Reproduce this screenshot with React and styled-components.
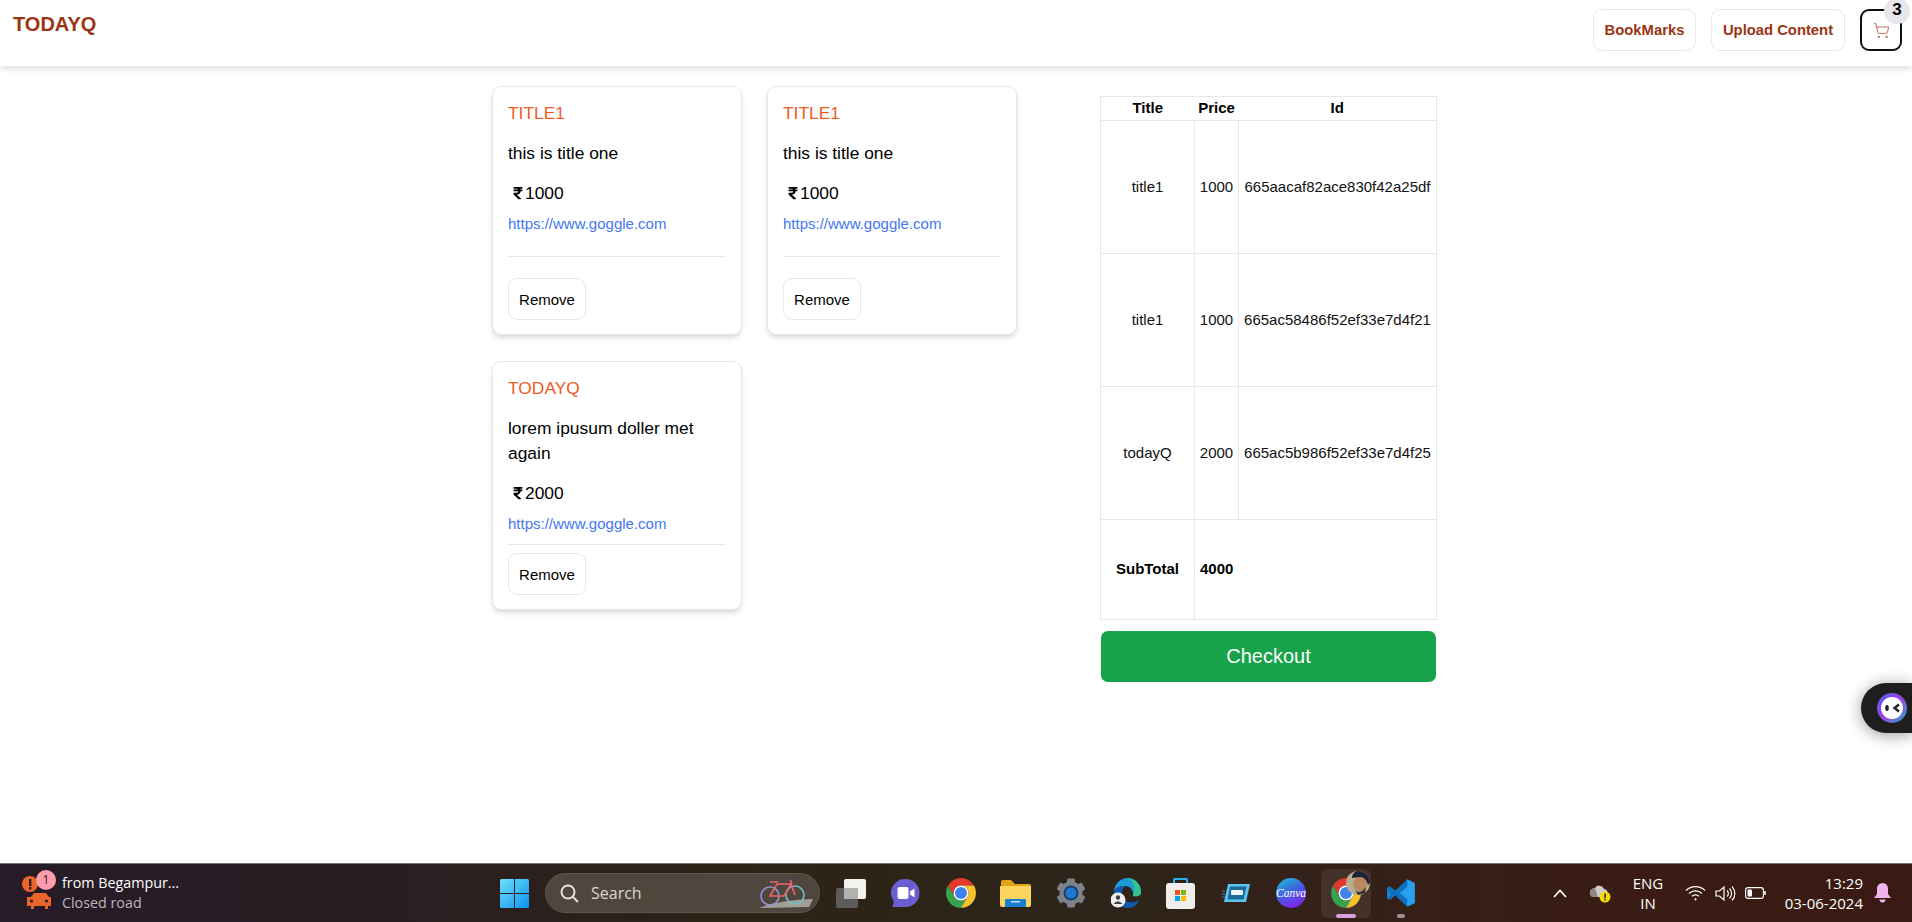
import React from "react";
import styled, { createGlobalStyle } from "styled-components";
import { ShoppingCart } from "lucide-react";
import { FaRupeeSign } from "react-icons/fa";

const Global = createGlobalStyle`
  * { box-sizing: border-box; }
  html, body { margin: 0; padding: 0; height: 100%; background: #fff; overflow: hidden; }
  body { font-family: "Liberation Sans", Arial, sans-serif; color: #000; }
`;

const Page = styled.div`display: flex; flex-direction: column; height: 922px; width: 1912px; position: relative; overflow: hidden;`;

const Navbar = styled.header`
  height: 66px; flex: none; display: flex; justify-content: space-between; align-items: flex-start;
  padding: 9px 10px 0 13px; background: #fff; box-shadow: 0 3px 6px rgba(0,0,0,.13); position: relative; z-index: 2;
`;
const Logo = styled.div`font-size: 20px; font-weight: 700; color: #9a3412; line-height: 22px; margin-top: 4px;`;
const NavActions = styled.nav`display: flex; gap: 15px;`;
const NavButton = styled.button`
  height: 42px; width: ${p => p.$w}px; padding: 0; background: #fff; border: 1px solid #e5e7eb; border-radius: 9px;
  font: 700 14.8px "Liberation Sans", Arial, sans-serif; color: #9a3412;
`;
const CartButton = styled.button`
  width: 42px; height: 42px; position: relative; padding: 0; display: flex; align-items: center; justify-content: center;
  background: #fff; border: 2px solid #111; border-radius: 9px; color: #b4472a;
`;
const Badge = styled.span`
  position: absolute; left: 22px; top: -13px; width: 26px; height: 26px; border-radius: 50%;
  background: #e5e7eb; color: #000; font-weight: 700; font-size: 17px; line-height: 24px; text-align: center;
`;

const Main = styled.main`flex: 1; display: flex; align-items: flex-start; padding: 20px 0 0 492px;`;
const CardGrid = styled.section`display: grid; grid-template-columns: 250px 250px; gap: 26px 25px;`;
const Card = styled.article`
  height: 249px; display: flex; flex-direction: column; padding: 17px 15px 14px; background: #fff;
  border: 1px solid #e5e7eb; border-radius: 9px; box-shadow: 0 4px 6px -1px rgba(0,0,0,.12), 0 2px 4px -2px rgba(0,0,0,.1);
`;
const CardTitle = styled.h2`margin: 0 0 18px; font-size: 17.4px; font-weight: 400; line-height: 19px; color: #ef5a1f;`;
const CardText = styled.p`margin: 0 0 15px; font-size: 17.4px; line-height: 25px;`;
const Price = styled.div`display: flex; align-items: center; padding-left: 3px; font-size: 17.4px; line-height: 24px; margin-bottom: 8px;`;
const CardLink = styled.a`font-size: 15px; line-height: 22px; color: #4477f2; text-decoration: none;`;
const Divider = styled.hr`margin: auto 0; border: 0; border-top: 1px solid #e5e7eb; width: 100%;`;
const RemoveButton = styled.button`
  align-self: flex-start; flex: none; width: 78px; height: 42px; padding: 0; background: #fff; border: 1px solid #e5e7eb;
  border-radius: 9px; font: 400 15px "Liberation Sans", Arial, sans-serif; color: #000;
`;

const Summary = styled.aside`width: 336px; margin: 10px 0 0 83px;`;
const Table = styled.table`width: 336px; table-layout: fixed; border-collapse: collapse; font-size: 15px;`;
const HeadCell = styled.th`height: 24px; padding: 0 0 2px; font-weight: 700; text-align: center; border-top: 1px solid #e5e7eb; border-bottom: 1px solid #e5e7eb; &:first-child { border-left: 1px solid #e5e7eb; } &:last-child { border-right: 1px solid #e5e7eb; }`;
const Cell = styled.td`height: ${p => p.$h || 133}px; padding: 0 0 2px; text-align: center; border: 1px solid #e5e7eb; white-space: nowrap; color: #111;`;
const TotalCell = styled(Cell)`font-weight: 700; color: #000; text-align: ${p => p.$left ? "left" : "center"}; padding-left: ${p => p.$left ? 5 : 0}px;`;
const Checkout = styled.button`
  display: block; width: 335px; height: 51px; margin: 11px 0 0 1px; background: #16a34a; border: 0; border-radius: 7px;
  font: 400 20px "Liberation Sans", Arial, sans-serif; color: #fff;
`;

const Assistant = styled.div`
  position: absolute; right: 0; top: 683px; width: 51px; height: 50px; display: flex; align-items: center; padding-left: 16px;
  background: #1e1e1e; border-radius: 25px 0 0 25px; box-shadow: 0 2px 16px rgba(0,0,0,.4);
`;

const Taskbar = styled.footer`
  height: 59px; flex: none; display: flex; align-items: center; color: #fff; font-family: "Open Sans", "Noto Sans", sans-serif;
  border-top: 1px solid #77736f;
  background: linear-gradient(90deg, #261b27 0%, #2a1e22 20%, #2d2316 40%, #2c2519 55%, #33211a 68%, #3a1c14 85%, #3a1a13 100%);
`;
const Weather = styled.div`width: 500px; flex: none; display: flex; align-items: center; padding-left: 22px; height: 100%;`;
const AlertIcon = styled.div`position: relative; width: 30px; height: 34px; flex: none; margin-right: 10px;`;
const AlertBadge = styled.span`
  position: absolute; left: 14px; top: -6px; width: 20px; height: 20px; border-radius: 50%; background: #ff9dad; color: #3a1a20;
  font-size: 12px; line-height: 20px; text-align: center;
`;
const WeatherText = styled.div`display: flex; flex-direction: column; font-size: 14.3px; line-height: 20px;`;
const Muted = styled.span`color: #bdb8b8;`;
const SearchBox = styled.div`
  width: 275px; height: 40px; flex: none; margin: 0 3px 0 16px; display: flex; align-items: center; padding: 0 6px 0 14px; gap: 12px;
  background: #4f463d; border: 1px solid #5d554c; border-radius: 20px; color: #dcd8d2; font-size: 16px;
`;
const Bike = styled.svg`margin-left: auto; flex: none;`;
const Slot = styled.div`
  width: 55px; height: 49px; flex: none; position: relative; display: flex; align-items: center; justify-content: center;
`;
const ActiveSlot = styled(Slot)`
  &::before { content: ""; position: absolute; inset: 0 2px 0 3px; border-radius: 6px; background: #45302a; }
  & > * { position: relative; }
`;
const Runner = styled.span`
  && { position: absolute; } bottom: 0; left: 50%; transform: translateX(-50%); height: 4px; border-radius: 2px;
  width: ${p => p.$w}px; background: ${p => p.$c};
`;
const Avatar = styled.svg`&& { position: absolute; } left: 28px; top: 2px;`;
const Tray = styled.div`margin-left: auto; display: flex; align-items: center; height: 100%; padding-right: 11px; font-size: 15px;`;
const TrayIcon = styled.div`width: ${p => p.$w}px; display: flex; justify-content: center; align-items: center; flex: none;`;
const Lang = styled.div`width: 40px; margin-right: 12px; text-align: center; line-height: 20px;`;
const Clock = styled.div`width: 88px; margin-left: 5px; text-align: right; line-height: 20px;`;

const Chrome = ({ s = 30 }) => (
  <svg width={s} height={s} viewBox="2 2 20 20">
    <path fill="#e3392d" d="M3.34 7A10 10 0 0 1 20.66 7H12A5 5 0 0 0 7.67 14.5Z" />
    <path fill="#35a34f" d="M3.34 7A10 10 0 0 0 12 22L16.33 14.5A5 5 0 0 1 7.67 14.5Z" />
    <path fill="#f5c22c" d="M20.66 7H12A5 5 0 0 1 16.33 14.5L12 22A10 10 0 0 0 20.66 7Z" />
    <circle cx="12" cy="12" r="5" fill="#fff" />
    <circle cx="12" cy="12" r="4" fill="#3f82ec" />
  </svg>
);

const cards = [
  { title: "TITLE1", text: "this is title one", price: 1000 },
  { title: "TITLE1", text: "this is title one", price: 1000 },
  { title: "TODAYQ", text: "lorem ipusum doller met again", price: 2000 },
];
const rows = [
  ["title1", 1000, "665aacaf82ace830f42a25df"],
  ["title1", 1000, "665ac58486f52ef33e7d4f21"],
  ["todayQ", 2000, "665ac5b986f52ef33e7d4f25"],
];

export default function App() {
  return (
    <Page>
      <Global />
      <Navbar>
        <Logo>TODAYQ</Logo>
        <NavActions>
          <NavButton $w={103}>BookMarks</NavButton>
          <NavButton $w={134}>Upload Content</NavButton>
          <CartButton>
            <ShoppingCart size={17} strokeWidth={1.1} />
            <Badge>3</Badge>
          </CartButton>
        </NavActions>
      </Navbar>

      <Main>
        <CardGrid>
          {cards.map((c, i) => (
            <Card key={i}>
              <CardTitle>{c.title}</CardTitle>
              <CardText>{c.text}</CardText>
              <Price><FaRupeeSign size={14} />{c.price}</Price>
              <CardLink href="#">https://www.goggle.com</CardLink>
              <Divider />
              <RemoveButton>Remove</RemoveButton>
            </Card>
          ))}
        </CardGrid>
        <Summary>
          <Table>
            <colgroup><col width="94" /><col width="44" /><col width="198" /></colgroup>
            <thead><tr><HeadCell>Title</HeadCell><HeadCell>Price</HeadCell><HeadCell>Id</HeadCell></tr></thead>
            <tbody>
              {rows.map(r => (
                <tr key={r[2]}><Cell>{r[0]}</Cell><Cell>{r[1]}</Cell><Cell>{r[2]}</Cell></tr>
              ))}
              <tr><TotalCell $h={100}>SubTotal</TotalCell><TotalCell $h={100} $left colSpan={2}>4000</TotalCell></tr>
            </tbody>
          </Table>
          <Checkout>Checkout</Checkout>
        </Summary>
      </Main>

      <Assistant>
        <svg width="30" height="30" viewBox="0 0 30 30">
          <defs><linearGradient id="ring" x1="0" y1="0" x2="1" y2="1"><stop offset="0" stopColor="#4a63f0" /><stop offset=".5" stopColor="#a23fe0" /><stop offset="1" stopColor="#1fb0c8" /></linearGradient></defs>
          <circle cx="15" cy="15" r="15" fill="url(#ring)" />
          <circle cx="15" cy="15" r="11" fill="#fff" />
          <ellipse cx="10" cy="15" rx="1.8" ry="3" fill="#222" />
          <path d="M22 11.5 L17.5 15 L22 18.5" stroke="#222" strokeWidth="2.4" fill="none" />
        </svg>
      </Assistant>

      <Taskbar>
        <Weather>
          <AlertIcon>
            <svg width="30" height="34" viewBox="0 0 30 34">
              <circle cx="8" cy="8" r="8" fill="#e8652a" />
              <rect x="7" y="3" width="2.4" height="7" fill="#2a1e22" />
              <rect x="7" y="11" width="2.4" height="2.4" fill="#2a1e22" />
              <path d="M9 21 L12 17 H24 L27 21 H29 V30 H26 V33 H23 V30 H12 V33 H9 V30 H5 V21Z" fill="#e8652a" />
              <circle cx="9.5" cy="25" r="1.6" fill="#2a1e22" /><circle cx="24.5" cy="25" r="1.6" fill="#2a1e22" />
            </svg>
            <AlertBadge>1</AlertBadge>
          </AlertIcon>
          <WeatherText>
            <span>from Begampur...</span>
            <Muted>Closed road</Muted>
          </WeatherText>
        </Weather>

        <svg width="29" height="29" viewBox="0 0 29 29">
          <defs><linearGradient id="win" x1="0" y1="0" x2="1" y2="1"><stop offset="0" stopColor="#6fe0fb" /><stop offset="1" stopColor="#0a93f0" /></linearGradient></defs>
          <path fill="url(#win)" d="M0 1.5 Q0 0 1.5 0H14V14H0ZM15 0H27.5Q29 0 29 1.5V14H15ZM0 15H14V29H1.5Q0 29 0 27.5ZM15 15H29V27.5Q29 29 27.5 29H15Z" />
        </svg>

        <SearchBox>
          <svg width="19" height="19" viewBox="0 0 19 19" fill="none" stroke="#e4e1dc" strokeWidth="2"><circle cx="8" cy="8" r="6.5" /><path d="M12.7 12.7L18 18" /></svg>
          Search
          <Bike width="54" height="30" viewBox="0 0 54 30" fill="none">
            <path d="M0 30 Q20 22 54 21 L50 29 Z" fill="#b9b5ad" opacity=".8" />
            <circle cx="11" cy="18" r="9" stroke="#8e96dc" strokeWidth="1.6" />
            <circle cx="36" cy="17" r="9" stroke="#6fc0c8" strokeWidth="1.6" />
            <path d="M11 18 L18 6 L32 6 L25 18 Z M32 6 L36 17 M31 1 L33 6 M11 4 L19 4" stroke="#f0606e" strokeWidth="1.6" />
            <path d="M28 1 H34" stroke="#445" strokeWidth="1.4" />
          </Bike>
        </SearchBox>

        <Slot>
          <svg width="30" height="29" viewBox="0 0 30 29">
            <rect x="0" y="9" width="22" height="20" rx="2" fill="#5c5c5a" />
            <rect x="8" y="0" width="22" height="20" rx="2" fill="#f4f2ee" />
            <rect x="8" y="9" width="14" height="11" fill="#b4b2ae" />
          </svg>
        </Slot>
        <Slot>
          <svg width="29" height="29" viewBox="0 0 29 29">
            <path fill="#6a5fd0" d="M14.5 0A14 14 0 0 1 14.5 28H1Q3.2 25 2.6 22A14 14 0 0 1 14.500 0Z" />
            <rect x="6.500" y="8" width="11" height="12" rx="2" fill="#fff" />
            <path d="M19 12.500 L23.500 9.500 V18.500 L19 15.500Z" fill="#fff" />
          </svg>
        </Slot>
        <Slot><Chrome /></Slot>
        <Slot>
          <svg width="31" height="27" viewBox="0 0 31 27">
            <path fill="#e4a318" d="M1 2Q1 0 3 0H11L15 4H29Q31 4 31 6V10H1Z" />
            <path fill="#fdd55e" d="M0 6H31V25Q31 27 29 27H2Q0 27 0 25Z" />
            <path fill="#1b7fd1" d="M5 20Q5 19 6 19H25Q26 19 26 20V27H5Z" />
            <rect x="11" y="21" width="9" height="1.500" fill="#bfe3f7" />
          </svg>
        </Slot>
        <Slot>
          <svg width="30" height="30" viewBox="0 0 30 30">
            <g fill="#7d8289">
              <circle cx="15" cy="15" r="11.500" />
              {[0, 60, 120, 180, 240, 300].map(a => (
                <rect key={a} x="11" y="0.500" width="8" height="6" rx="1.500" transform={`rotate(${a} 15 15)`} />
              ))}
            </g>
            <circle cx="15" cy="15" r="7.500" fill="#1c3f70" />
            <circle cx="15" cy="15" r="5.500" fill="#1f78d1" />
          </svg>
        </Slot>
        <Slot>
          <svg width="30" height="30" viewBox="0 0 30 30">
            <path fill="#1c9ad6" d="M3 13C4 5 10 0 16 0 25 0 30 7 30 14 30 18 26 19 22 18 23 12 19 8 14 8 9 8 5 10 3 13Z" />
            <path fill="#31c48d" d="M22 18C26 19 30 18 30 14 30 7 25 0 16 0 22 2 25 8 22 18Z" />
            <path fill="#0d5bad" d="M3 13C1 21 7 30 17 30 23 30 27 26 28 22 24 25 14 26 11 19 10 15 11 11 14 8 9 8 5 10 3 13Z" />
            <circle cx="7" cy="22" r="7.500" fill="#eee" />
            <circle cx="7" cy="19.500" r="2.200" fill="#444" />
            <path d="M2.500 26Q7 20.500 11.500 26Z" fill="#444" />
          </svg>
        </Slot>
        <Slot>
          <svg width="29" height="31" viewBox="0 0 29 31">
            <path d="M8 6V2Q8 1 9 1H20Q21 1 21 2V6" stroke="#25b4f0" strokeWidth="2" fill="none" />
            <rect x="0" y="5" width="29" height="26" rx="3" fill="#f0eeeb" />
            <rect x="9" y="12" width="5" height="5" fill="#f0512a" />
            <rect x="15" y="12" width="5" height="5" fill="#7fba00" />
            <rect x="9" y="18" width="5" height="5" fill="#00a4ef" />
            <rect x="15" y="18" width="5" height="5" fill="#ffb900" />
          </svg>
        </Slot>
        <Slot>
          <svg width="28" height="18" viewBox="0 0 28 18">
            <path d="M0 7H3M0 10H3M0 13H3" stroke="#2a8fc0" strokeWidth="1" />
            <path d="M6 0H28L24 18H2Z" fill="#5cc4ef" />
            <path d="M8 2.500H24.500L21.500 15.500H5.500Z" fill="#1a6a9a" />
            <rect x="9" y="6" width="12" height="5" rx="1" fill="#e9f5fb" />
          </svg>
        </Slot>
        <Slot>
          <svg width="30" height="30" viewBox="0 0 30 30">
            <defs><linearGradient id="canva" x1="0" y1="0" x2=".5" y2="1"><stop offset="0" stopColor="#19c4cf" /><stop offset=".55" stopColor="#3f62e0" /><stop offset="1" stopColor="#7d2ae8" /></linearGradient></defs>
            <circle cx="15" cy="15" r="15" fill="url(#canva)" />
            <text x="15" y="19" textAnchor="middle" fontFamily="Liberation Serif, serif" fontStyle="italic" fontSize="11.5" fill="#fff">Canva</text>
          </svg>
        </Slot>
        <ActiveSlot>
          <Chrome />
          <Avatar width="24" height="24" viewBox="0 0 24 24">
            <circle cx="12" cy="12" r="12" fill="#b7ad92" />
            <path d="M12 0A12 12 0 0 1 24 12L22 14C20 6 12 6 6 7 6 3 9 0 12 0Z" fill="#1b2233" />
            <circle cx="14" cy="13" r="7" fill="#b98860" />
            <path d="M9 19Q14 24 20 16L19 22 12 24Z" fill="#3d3028" />
          </Avatar>
          <Runner $w={20} $c="#d8a2e0" />
        </ActiveSlot>
        <Slot>
          <svg width="30" height="30" viewBox="0 0 24 24">
            <path fill="#0f6fc0" d="M17 1 23 4V20L17 23 7.500 14 3 17.500 1 16.500V7.500L3 6.500 7.500 10Z" />
            <path fill="#2aa0ea" d="M17 1 23 4V20L17 23ZM17 7 11 12 17 17Z" />
            <path fill="#1b87d8" d="M1 16.500 4 13 1 7.500Z" />
          </svg>
          <Runner $w={8} $c="#9b9591" />
        </Slot>

        <Tray>
          <TrayIcon $w={24}>
            <svg width="14" height="9" viewBox="0 0 14 9" fill="none" stroke="#fff" strokeWidth="1.700"><path d="M1 8L7 1.500 13 8" /></svg>
          </TrayIcon>
          <TrayIcon $w={56}>
            <svg width="22" height="20" viewBox="0 0 22 20">
              <path d="M1 11A5 5 0 0 1 6 5 5 5 0 0 1 15 6 4 4 0 0 1 14 14H4A3.500 3.500 0 0 1 1 11Z" fill="#cfcdcb" />
              <path d="M1 11A5 5 0 0 1 6 5L9 14H4A3.500 3.500 0 0 1 1 11Z" fill="#8d8986" />
              <circle cx="16" cy="14" r="5.500" fill="#f5d90a" />
              <rect x="15.300" y="10.500" width="1.500" height="4.500" fill="#222" /><rect x="15.300" y="15.800" width="1.500" height="1.500" fill="#222" />
            </svg>
          </TrayIcon>
          <Lang>ENG<br />IN</Lang>
          <TrayIcon $w={30}>
            <svg width="21" height="16" viewBox="0 0 21 16" fill="none" stroke="#fff" strokeWidth="1.200"><path d="M1 5.500A13.500 13.500 0 0 1 20 5.500M4 8.500A9.500 9.500 0 0 1 17 8.500M7 11.300A5 5 0 0 1 14 11.300" /><circle cx="10.500" cy="14.300" r="1.100" fill="#fff" stroke="none" /></svg>
          </TrayIcon>
          <TrayIcon $w={30}>
            <svg width="21" height="17" viewBox="0 0 21 17" fill="none" stroke="#fff" strokeWidth="1.200"><path d="M1 6H4.500L9 2V15L4.500 11H1Z" /><path d="M12 5.500A4 4 0 0 1 12 11.500M14.500 3.500A7 7 0 0 1 14.500 13.500M17 1.500A10 10 0 0 1 17 15.500" /></svg>
          </TrayIcon>
          <TrayIcon $w={30}>
            <svg width="21" height="12" viewBox="0 0 21 12" fill="none" stroke="#fff" strokeWidth="1.100"><rect x=".6" y=".6" width="17.800" height="10.800" rx="2.500" /><rect x="2.500" y="2.500" width="4.500" height="7" rx="1" fill="#fff" stroke="none" /><path d="M20 4V8" strokeWidth="1.500" /></svg>
          </TrayIcon>
          <Clock>13:29<br />03-06-2024</Clock>
          <TrayIcon $w={38}>
            <svg width="17" height="20" viewBox="0 0 17 20" fill="#eeb3ea"><path d="M8.500 0A5.500 5.500 0 0 1 14 5.500V11L17 15H0L3 11V5.500A5.500 5.500 0 0 1 8.500 0Z" /><path d="M5.500 16.500H11.500A3 3 0 0 1 5.500 16.500Z" /></svg>
          </TrayIcon>
        </Tray>
      </Taskbar>
    </Page>
  );
}
